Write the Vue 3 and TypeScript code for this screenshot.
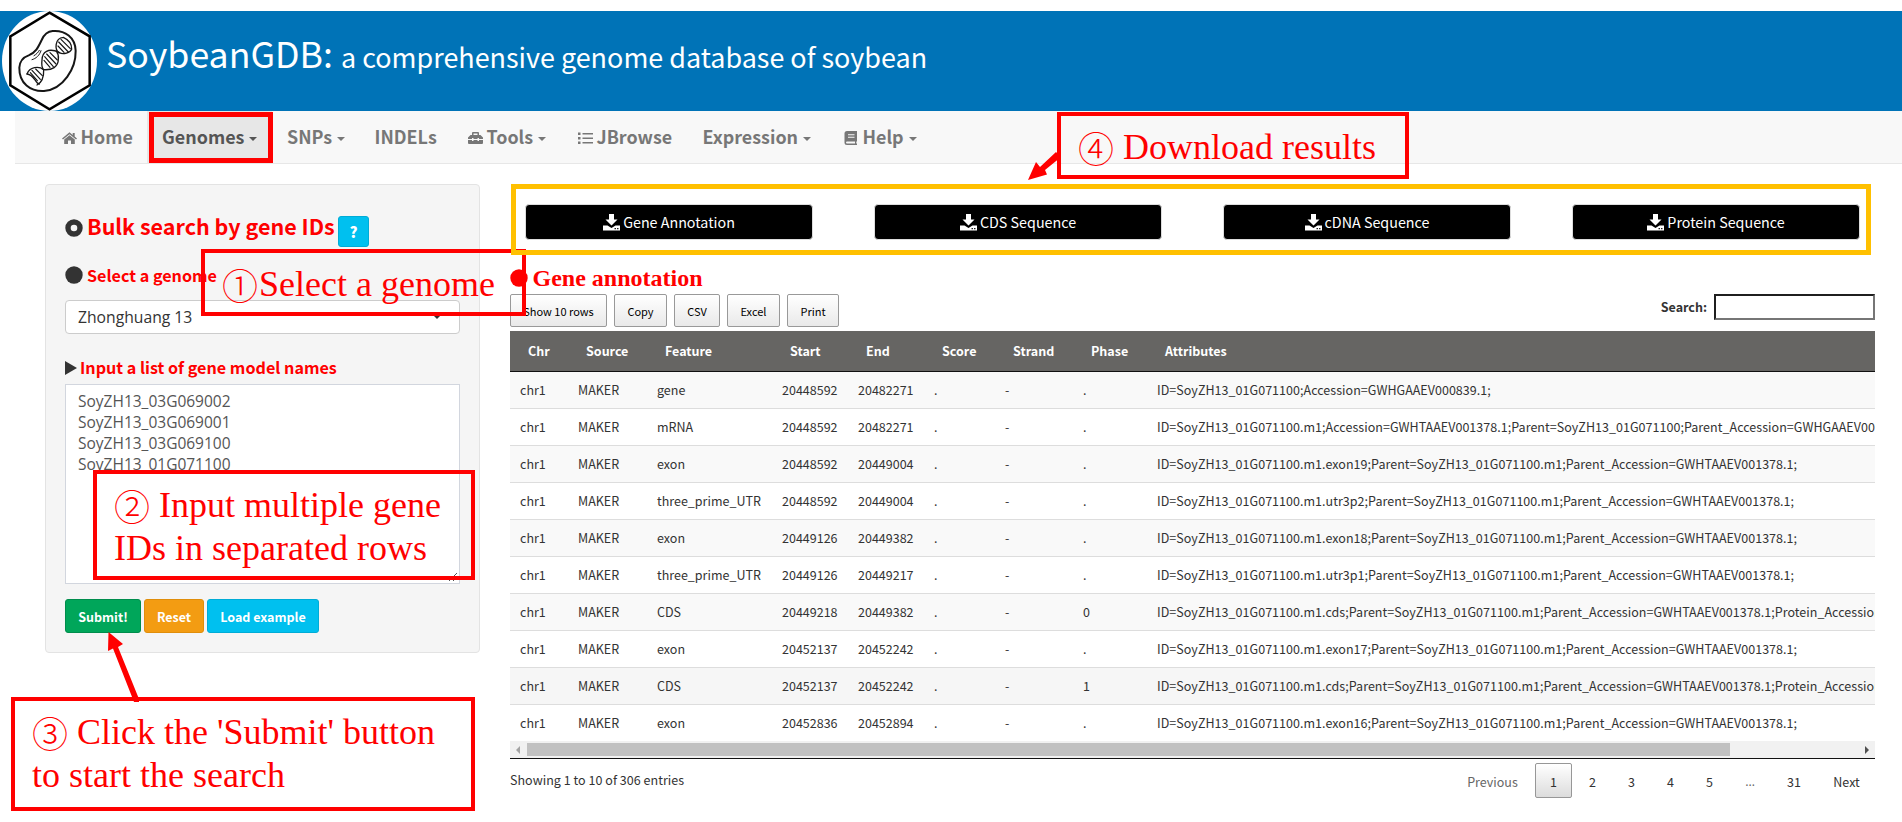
<script setup lang="ts">
interface NavItem { label: string; width: number; icon?: string; caret?: boolean; active?: boolean }
interface Row { feature: string; start: string; end: string; phase: string; attrs: string }

const nav: NavItem[] = [
  { label: 'Home', width: 100.5, icon: 'home' },
  { label: 'Genomes', width: 125, caret: true, active: true },
  { label: 'SNPs', width: 87.5, caret: true },
  { label: 'INDELs', width: 93 },
  { label: 'Tools', width: 110, icon: 'tools', caret: true },
  { label: 'JBrowse', width: 125, icon: 'list' },
  { label: 'Expression', width: 141, caret: true },
  { label: 'Help', width: 104, icon: 'book', caret: true },
]

const downloads: string[] = ['Gene Annotation', 'CDS Sequence', 'cDNA Sequence', 'Protein Sequence']
const exportButtons = [
  { label: 'Show 10 rows', width: 97 },
  { label: 'Copy', width: 53 },
  { label: 'CSV', width: 46 },
  { label: 'Excel', width: 53 },
  { label: 'Print', width: 52 },
]
const columns: string[] = ['Chr', 'Source', 'Feature', 'Start', 'End', 'Score', 'Strand', 'Phase', 'Attributes']

const gene = 'SoyZH13_01G071100'
const child = (kind: string, tail = ''): string =>
  `ID=${gene}.m1.${kind};Parent=${gene}.m1;Parent_Accession=GWHTAAEV001378.1;${tail}`

const rows: Row[] = [
  { feature: 'gene', start: '20448592', end: '20482271', phase: '.', attrs: `ID=${gene};Accession=GWHGAAEV000839.1;` },
  { feature: 'mRNA', start: '20448592', end: '20482271', phase: '.', attrs: `ID=${gene}.m1;Accession=GWHTAAEV001378.1;Parent=${gene};Parent_Accession=GWHGAAEV000839.1;` },
  { feature: 'exon', start: '20448592', end: '20449004', phase: '.', attrs: child('exon19') },
  { feature: 'three_prime_UTR', start: '20448592', end: '20449004', phase: '.', attrs: child('utr3p2') },
  { feature: 'exon', start: '20449126', end: '20449382', phase: '.', attrs: child('exon18') },
  { feature: 'three_prime_UTR', start: '20449126', end: '20449217', phase: '.', attrs: child('utr3p1') },
  { feature: 'CDS', start: '20449218', end: '20449382', phase: '0', attrs: child('cds', 'Protein_Accession=') },
  { feature: 'exon', start: '20452137', end: '20452242', phase: '.', attrs: child('exon17') },
  { feature: 'CDS', start: '20452137', end: '20452242', phase: '1', attrs: child('cds', 'Protein_Accession=') },
  { feature: 'exon', start: '20452836', end: '20452894', phase: '.', attrs: child('exon16') },
]
const geneIds: string[] = ['SoyZH13_03G069002', 'SoyZH13_03G069001', 'SoyZH13_03G069100', 'SoyZH13_01G071100']
const pages = [
  { label: 'Previous', width: 81, kind: 'muted' },
  { label: '1', width: 37, kind: 'current' },
  { label: '2', width: 37, kind: '' },
  { label: '3', width: 37, kind: '' },
  { label: '4', width: 37, kind: '' },
  { label: '5', width: 37, kind: '' },
  { label: '…', width: 40, kind: 'muted ellipsis' },
  { label: '31', width: 44, kind: '' },
  { label: 'Next', width: 57, kind: '' },
]
</script>

<template>
  <div class="page">
    <header class="banner">
      <svg class="logo" viewBox="0 33 300 300" fill="none" stroke="#161616" stroke-linecap="round">
        <ellipse cx="148.5" cy="183" rx="142.5" ry="150" fill="#fff" stroke="none" />
        <path d="M148.500 38 269 109V256L148.500 328 31 256V109Z" stroke="#000" stroke-width="7.500" stroke-linejoin="miter" />
        <path d="M158 93C195 90 226 112 227 152C228 205 190 268 132 273C92 275 57 250 58 203C59 184 69 172 86 166C107 158 114 143 125 120C132 104 143 94 158 93Z" stroke-width="6" />
        <path d="M96 179C108 176 119 166 123 152M102 167C109 163 115 157 118 151" stroke-width="3" />
        <g stroke-width="4">
          <path d="M190 112C164 114 163 151 178 158C190 165 211 158 215 148M190 112C205 119 216 129 215 148" />
          <path d="M178 158C145 141 126 157 126 180C124 195 127 205 131 209C156 211 175 201 175 177C176 168 176 162 169 153" />
          <path d="M131 209C116 197 89 201 81 222M131 209C132 231 127 246 111 255" />
          <path d="M81 222C94 222 101 234 108 244C111 249 114 251 118 252" />
        </g>
        <path d="M176 126 205 156M183 118 211 146M174 138 192 157M140 162 168 192M134 170 160 200M150 158 172 180M132 181 150 202M96 211 121 238M91 218 112 242M107 207 127 227" stroke-width="3.500" />
      </svg>
      <h1 class="title">SoybeanGDB: <small>a comprehensive genome database of soybean</small></h1>
    </header>

    <nav class="nav">
      <a v-for="item in nav" :key="item.label" class="nav-item" :class="{ active: item.active }" :style="{ width: item.width + 'px' }">
        <svg v-if="item.icon === 'home'" class="nav-icon" viewBox="0 0 15 14">
          <path d="M7.500 1.200 0 7.500 1 8.500 7.500 3.200 14 8.500 15 7.500 12.700 5.500V2H10.700V3.900Z" />
          <path d="M7.500 4.300 2.200 8.600V13H6V9.500H9V13H12.800V8.600Z" />
        </svg>
        <svg v-else-if="item.icon === 'tools'" class="nav-icon" viewBox="0 0 15 14">
          <path d="M4 4V2Q4 1 5 1H10Q11 1 11 2V4H12.500L15 6.500V8H11V7H9.500V8H5.500V7H4V8H0V6.500L2.500 4ZM5.500 4H9.500V2.500H5.500ZM0 9H4V10H5.500V9H9.500V10H11V9H15V12Q15 13 14 13H1Q0 13 0 12Z" fill-rule="evenodd" />
        </svg>
        <svg v-else-if="item.icon === 'list'" class="nav-icon" viewBox="0 0 15 14">
          <path d="M0 1.500H2.500V4H0ZM4.500 2H15V3.500H4.500ZM0 6H2.500V8.500H0ZM4.500 6.500H15V8H4.500ZM0 10.500H2.500V13H0ZM4.500 11H15V12.500H4.500Z" />
        </svg>
        <svg v-else-if="item.icon === 'book'" class="nav-icon" viewBox="0 0 15 14">
          <path d="M3 0H13V10.500H12.300V12.500H13V14H3Q.5 14 .5 11.500V2.500Q.5 0 3 0ZM4 3.200V4.200H10.500V3.200ZM4 5.700V6.700H10.500V5.700ZM3 10.500Q2 10.500 2 11.500T3 12.500H11V10.500Z" fill-rule="evenodd" />
        </svg>
        <span>{{ item.label }}</span>
        <i v-if="item.caret" class="caret"></i>
      </a>
    </nav>

    <main class="main">
      <aside class="panel">
        <div class="panel-title">
          <svg class="bullet" viewBox="0 0 18 18"><path d="M9 .3A8.700 8.700 0 1 0 9 17.700 8.700 8.700 0 1 0 9 .3ZM9 5.700A3.300 3.300 0 1 1 9 12.300 3.300 3.300 0 1 1 9 5.700Z" fill="#333" fill-rule="evenodd" /></svg>
          <h2>Bulk search by gene IDs</h2>
          <button class="help">?</button>
        </div>
        <div class="field-label genome-label">
          <svg class="bullet" viewBox="0 0 18 18"><circle cx="9" cy="9" r="8.700" fill="#333" /></svg>
          <span>Select a genome</span>
        </div>
        <div class="select"><span>Zhonghuang 13</span><i class="caret"></i></div>
        <div class="field-label ids-label">
          <svg class="triangle" viewBox="0 0 12 14"><path d="M0 0 12 7 0 14Z" fill="#333" /></svg>
          <span>Input a list of gene model names</span>
        </div>
        <div class="ids">
          <div v-for="id in geneIds" :key="id">{{ id }}</div>
          <svg class="grip" viewBox="0 0 10 10"><path d="M1 9 9 1M5 9 9 5" stroke="#555" /></svg>
        </div>
        <div class="actions">
          <button class="btn submit">Submit!</button>
          <button class="btn reset">Reset</button>
          <button class="btn example">Load example</button>
        </div>
      </aside>

      <section class="results">
        <div class="downloads">
          <button v-for="label in downloads" :key="label" class="download">
            <svg viewBox="0 0 17 17"><path d="M6 0H11V5.500H14.500L8.500 11.500 2.500 5.500H6ZM0 11.500H4.500L8.500 14 12.500 11.500H17V16.500H0Z" fill="#fff" /><path d="M11.500 14H13V15.200H11.500ZM14 14H15.500V15.200H14Z" fill="#222" /></svg>
            <span>{{ label }}</span>
          </button>
        </div>

        <div class="results-title">
          <svg class="bullet" viewBox="0 0 18 18"><circle cx="9" cy="9" r="8.700" fill="#f00" /></svg>
          <h3>Gene annotation</h3>
        </div>

        <div class="toolbar">
          <button v-for="b in exportButtons" :key="b.label" class="export" :style="{ width: b.width + 'px' }">{{ b.label }}</button>
          <label class="search">Search:<span class="search-box"></span></label>
        </div>

        <div class="table">
          <div class="row head"><span v-for="c in columns" :key="c">{{ c }}</span></div>
          <div v-for="(r, i) in rows" :key="i" class="row" :class="{ odd: i % 2 === 0, hover: i === 8 }">
            <span>chr1</span><span>MAKER</span><span>{{ r.feature }}</span><span>{{ r.start }}</span><span>{{ r.end }}</span><span>.</span><span>-</span><span>{{ r.phase }}</span><span class="attrs">{{ r.attrs }}</span>
          </div>
          <div class="scrollbar">
            <svg viewBox="0 0 4 8"><path d="M4 0V8L0 4Z" fill="#a3a3a3" /></svg>
            <div class="thumb"></div>
            <svg viewBox="0 0 4 8"><path d="M0 0V8L4 4Z" fill="#505050" /></svg>
          </div>
        </div>

        <div class="footer">
          <span class="info">Showing 1 to 10 of 306 entries</span>
          <div class="pages">
            <span v-for="p in pages" :key="p.label" class="page-btn" :class="p.kind" :style="{ width: p.width + 'px' }">{{ p.label }}</span>
          </div>
        </div>
      </section>
    </main>

    <div class="mark mark-nav"></div>
    <div class="note note-1"><p><b>①</b><span>Select a genome</span></p></div>
    <div class="note note-2"><p><b>②</b><span>Input multiple gene</span></p><p><span>IDs in separated rows</span></p></div>
    <div class="note note-3"><p><b>③</b><span>Click the 'Submit' button</span></p><p><span>to start the search</span></p></div>
    <div class="note note-4"><p><b>④</b><span>Download results</span></p></div>
    <div class="mark mark-downloads"></div>
    <svg class="arrows" viewBox="0 0 1902 822" fill="#f00">
      <path d="M108.500 632 123 644 118 647 139 699V702H134L113 648.500 108 651Z" />
      <path d="M1028 180 1036 162 1040 167 1056 152 1061 157 1045 170 1047 174.500Z" />
    </svg>
  </div>
</template>

<style>
body { margin: 0; background: #fff; }
</style>

<style scoped>
.page { position: relative; width: 1902px; height: 822px; overflow: hidden; box-sizing: border-box; padding-top: 11px; background: #fff; color: #333; font-family: "Noto Sans CJK SC", "Noto Sans", sans-serif; font-size: 12.5px; white-space: nowrap; }
.page * { box-sizing: border-box; }
h1, h2, h3, p { margin: 0; font-weight: inherit; }
button { font-family: inherit; padding: 0; margin: 0; }

.banner { display: flex; height: 100px; background: #0073b7; color: #fff; }
.logo { width: 100px; height: 100px; flex: none; }
.title { margin-left: 6px; font-size: 35.700px; line-height: 83px; font-weight: 400; }
.title small { font-size: 26.950px; }

.nav { display: flex; height: 53px; margin-left: 15px; padding-left: 31.500px; background: #f8f8f8; border-bottom: 1px solid #e7e7e7; }
.nav-item { display: flex; align-items: center; flex: none; padding-left: 15px; height: 52px; line-height: 50px; color: #777; font-size: 17.900px; font-weight: 700; }
.nav-item.active { background: #e7e7e7; color: #555; }
.nav-icon { width: 15px; height: 14px; margin: 2px 4px 0 0; fill: #777; flex: none; }
.nav-item span { margin-top: -2px; }
.caret { width: 0; height: 0; border: 4px solid transparent; border-top-color: currentColor; border-bottom: 0; margin: 4px 0 0 5px; }

.main { display: flex; padding: 20px 27px 0 45px; }
.panel { width: 435px; height: 469px; padding: 31px 19px 0; background: #f5f5f5; border: 1px solid #e3e3e3; border-radius: 4px; }
.panel-title { display: flex; height: 31px; color: #f00; }
.bullet { width: 18px; height: 18px; flex: none; }
.panel-title .bullet { margin-top: 3px; }
.panel-title h2 { margin-left: 4px; width: 251px; font-size: 21.500px; font-weight: 700; line-height: 20px; }
.help { width: 31px; height: 31px; border: 1px solid #00acd6; border-radius: 3px; background: #00c0ef; color: #fff; font-size: 15px; font-weight: 900; line-height: 25px; }
.field-label { display: flex; align-items: center; height: 20px; color: #f00; font-size: 16.150px; font-weight: 700; line-height: 20px; }
.genome-label { margin-top: 18px; }
.genome-label span { margin-left: 4px; }
.select { display: flex; align-items: center; justify-content: space-between; margin-top: 15px; height: 34px; border: 1px solid #ccc; border-radius: 4px; background: #fff; padding: 0 18px 0 12px; font-family: "Open Sans", sans-serif; font-size: 15.700px; }
.select .caret { margin: 0; }
.ids-label { margin-top: 24px; }
.ids-label .triangle { width: 12px; height: 14px; margin-right: 3px; }
.ids-label span { margin-top: -2px; }
.ids { position: relative; height: 200px; margin-top: 6px; padding: 6px 12px; border: 1px solid #d2d6de; background: #fff; color: #555; font-family: "Open Sans", sans-serif; font-size: 15.500px; line-height: 21px; }
.grip { position: absolute; right: 1px; bottom: 1px; width: 10px; height: 10px; }
.actions { display: flex; gap: 3px; margin-top: 15px; }
.btn { height: 34px; border: 1px solid; border-radius: 3px; color: #fff; font-size: 12.500px; font-weight: 700; line-height: 31px; }
.submit { width: 76px; background: #00a65a; border-color: #008d4c; }
.reset { width: 60px; background: #f39c12; border-color: #e08e0b; }
.example { width: 112px; background: #00c0ef; border-color: #00acd6; }

.results { width: 1365px; margin-left: 30px; }
.downloads { display: flex; gap: 61px; padding: 20px 15px 0 15px; height: 82px; }
.download { display: flex; align-items: center; justify-content: center; gap: 3px; flex: 1; height: 36px; border: 1px solid #ddd; border-radius: 4px; background: #000; color: #fff; font-size: 14.300px; line-height: 34px; }
.download svg { width: 17px; height: 17px; }
.results-title { display: flex; height: 28px; align-items: center; padding-bottom: 4px; color: #f00; }
.results-title h3 { margin-left: 4.500px; font-family: "Liberation Serif", serif; font-size: 24px; font-weight: 700; line-height: 24px; }
.toolbar { display: flex; gap: 7px; height: 37px; }
.export { height: 33px; border: 1px solid #999; border-radius: 2px; background: linear-gradient(#fff, #e9e9e9); color: #000; font-size: 11px; line-height: 30px; }
.search { display: flex; margin-left: auto; font-size: 12.500px; line-height: 25px; font-weight: 700; }
.search-box { width: 161px; height: 26px; margin-left: 7px; border: 2px solid #767676; border-top-color: #1f1f1f; border-left-color: #1f1f1f; }

.table { height: 428px; border-bottom: 1px solid #111; overflow: hidden; }
.row { display: grid; grid-template-columns: 58px 79px 125px 76px 76px 71px 78px 74px 1fr; height: 37px; padding-left: 10px; border-bottom: 1px solid #ddd; line-height: 36px; }
.row span { min-width: 0; }
.row .attrs { letter-spacing: .035px; }
.row.head { height: 41px; padding-left: 18px; background: #666563; border-bottom-color: #111; color: #fff; font-weight: 700; line-height: 40px; }
.row.odd { background: #f9f9f9; }
.row.hover { background: #f6f6f6; }
.row:nth-last-child(2) { border-bottom: 0; height: 36px; }
.scrollbar { display: flex; align-items: center; height: 17px; padding: 0 6px; background: #f1f1f1; }
.scrollbar svg { width: 4px; height: 8px; }
.thumb { width: 1203px; height: 13px; margin: 0 auto 0 7px; background: #c1c1c1; }

.footer { display: flex; justify-content: space-between; padding-top: 4px; }
.info { line-height: 34px; letter-spacing: .03px; }
.pages { display: flex; gap: 2px; }
.page-btn { height: 35px; line-height: 35px; text-align: center; border: 1px solid transparent; }
.page-btn.muted { color: #666; }
.page-btn.ellipsis { font-family: "Open Sans", sans-serif; }
.page-btn.current { border-color: #979797; border-radius: 2px; background: linear-gradient(#fff, #dcdcdc); }

.mark, .note { position: absolute; }
.mark-nav { left: 149px; top: 112px; width: 124px; height: 51px; border: 5px solid #f00; }
.mark-downloads { left: 511px; top: 184px; width: 1360px; height: 71px; border: 5px solid #ffc000; }
.note { border: 4px solid #f00; color: #f00; font-family: "Liberation Serif", serif; font-size: 36px; }
.note p { display: flex; height: 43px; line-height: 43px; }
.note b { font-family: "Noto Sans CJK SC", sans-serif; font-weight: 300; width: 37px; }
.note-1 { left: 201px; top: 249px; width: 325px; height: 67px; padding: 10px 0 0 17px; }
.note-2 { left: 93px; top: 470px; width: 382px; height: 110px; padding: 10px 0 0 17px; }
.note-3 { left: 11px; top: 697px; width: 464px; height: 114px; padding: 10px 0 0 17px; }
.note-4 { left: 1057px; top: 112px; width: 352px; height: 67px; padding: 10px 0 0 17px; }
.note-2 b, .note-3 b, .note-4 b { width: 45px; }
.arrows { position: absolute; inset: 0; width: 1902px; height: 822px; pointer-events: none; }
</style>
